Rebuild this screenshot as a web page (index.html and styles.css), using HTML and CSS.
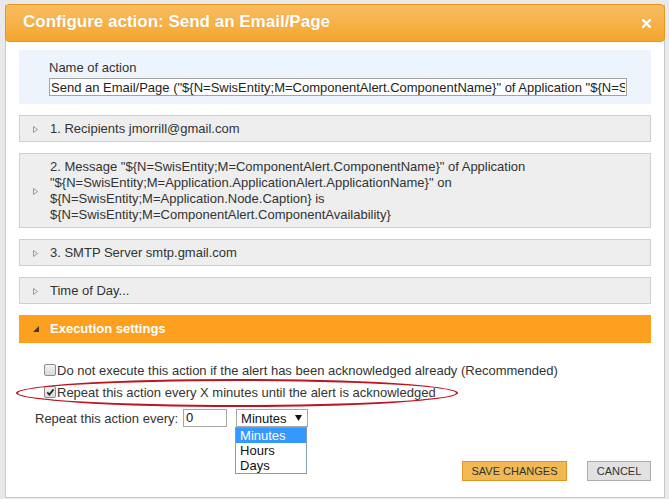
FILE: index.html
```html
<!DOCTYPE html>
<html>
<head>
<meta charset="utf-8">
<link rel="stylesheet" href="styles.css">
</head>
<body>
<div class="dialog">
  <div class="titlebar">
    <span class="title">Configure action: Send an Email/Page</span>
    <svg class="close" width="9" height="9" viewBox="0 0 9 9"><path d="M1.2 1.2 L7.8 7.8 M7.8 1.2 L1.2 7.8" stroke="#fff" stroke-width="2.3" stroke-linecap="square"/></svg>
  </div>
  <div class="content">
    <div class="name-panel">
      <div class="name-label">Name of action</div>
      <input class="name-input" type="text" value='Send an Email/Page ("${N=SwisEntity;M=ComponentAlert.ComponentName}" of Application "${N=SwisEntity;M=Application.ApplicationAlert.ApplicationName}" on ${N=SwisEntity;M=Application.Node.Caption})'>
    </div>

    <div class="row">
      <svg class="tri" width="5" height="7" viewBox="0 0 5 7"><polygon points="0.5,0.5 4.5,3.5 0.5,6.5" fill="none" stroke="#9a9a9a" stroke-width="1"/></svg>
      <div class="row-text">1. Recipients jmorrill@gmail.com</div>
    </div>
    <div class="row">
      <svg class="tri" width="5" height="7" viewBox="0 0 5 7"><polygon points="0.5,0.5 4.5,3.5 0.5,6.5" fill="none" stroke="#9a9a9a" stroke-width="1"/></svg>
      <div class="row-text">2. Message "${N=SwisEntity;M=ComponentAlert.ComponentName}" of Application<br>"${N=SwisEntity;M=Application.ApplicationAlert.ApplicationName}" on<br>${N=SwisEntity;M=Application.Node.Caption} is<br>${N=SwisEntity;M=ComponentAlert.ComponentAvailability}</div>
    </div>
    <div class="row">
      <svg class="tri" width="5" height="7" viewBox="0 0 5 7"><polygon points="0.5,0.5 4.5,3.5 0.5,6.5" fill="none" stroke="#9a9a9a" stroke-width="1"/></svg>
      <div class="row-text">3. SMTP Server smtp.gmail.com</div>
    </div>
    <div class="row">
      <svg class="tri" width="5" height="7" viewBox="0 0 5 7"><polygon points="0.5,0.5 4.5,3.5 0.5,6.5" fill="none" stroke="#9a9a9a" stroke-width="1"/></svg>
      <div class="row-text">Time of Day...</div>
    </div>

    <div class="exec-header">
      <svg class="tri-se" width="6" height="6" viewBox="0 0 6 6"><polygon points="6,0 6,6 0,6" fill="#3a3a3a"/></svg>
      <span>Execution settings</span>
    </div>
    <div class="exec-body">
      <div class="check-line"><span class="cb"></span><span>Do not execute this action if the alert has been acknowledged already (Recommended)</span></div>
      <div class="check-line"><span class="cb"><svg width="11" height="11" viewBox="0 0 11 11"><path d="M2.3 5.4 L4.4 7.6 L8.6 2.4" fill="none" stroke="#262626" stroke-width="1.7"/></svg></span><span>Repeat this action every X minutes until the alert is acknowledged</span></div>
      <div class="ellipse"></div>
      <div class="repeat-line">
        <span>Repeat this action every:</span>
        <span class="num-input">0</span>
        <div class="select-wrap">
          <div class="select"><span>Minutes</span><svg width="7" height="6" viewBox="0 0 7 6"><polygon points="0,0 7,0 3.5,6" fill="#111"/></svg></div>
          <div class="listbox">
            <div class="opt selected">Minutes</div>
            <div class="opt">Hours</div>
            <div class="opt">Days</div>
          </div>
        </div>
      </div>
    </div>

    <div class="footer">
      <button class="btn save">SAVE CHANGES</button>
      <button class="btn cancel">CANCEL</button>
    </div>
  </div>
</div>
</body>
</html>
```

FILE: styles.css
```css
html, body {
  margin: 0;
  padding: 0;
}
body {
  background: #e9e9e9;
  font-family: "Liberation Sans", Arial, sans-serif;
  font-size: 13px;
  color: #333;
  padding: 4px 0 0 5px;
  height: 499px;
  box-sizing: border-box;
  overflow: hidden;
}
.dialog {
  width: 660px;
  height: 494px;
  box-sizing: border-box;
  background: #fff;
  border: 1px solid #c9c9c9;
  border-top: none;
}
.titlebar {
  height: 38px;
  box-sizing: border-box;
  margin: 0 -1px;
  border: 1px solid #e8951c;
  border-radius: 4px;
  background: linear-gradient(#f8bd5e 0%, #f6b24a 48%, #f4a62d 100%);
  display: flex;
  align-items: center;
  justify-content: space-between;
  padding: 0 13px 2px 17px;
}
.title {
  color: #fff;
  font-weight: bold;
  font-size: 17px;
  text-shadow: 0 0 1px rgba(180, 100, 0, 0.25);
}
.close {
  display: block;
  margin-top: 2px;
}
.content {
  padding: 0 13px;
}
.name-panel {
  margin-top: 8px;
  background: #edf4fb;
  padding: 10px 24px 8px 30px;
}
.name-label {
  line-height: 16px;
  color: #333;
}
.name-input {
  display: block;
  margin: 2px 0 0 0;
  width: 578px;
  height: 18px;
  box-sizing: border-box;
  border: 1px solid #a3a3a3;
  padding: 0 1px;
  font-family: "Liberation Sans", Arial, sans-serif;
  font-size: 13px;
  color: #222;
  background: #fff;
  outline: none;
}
.row {
  margin-top: 11px;
  background: #eeeeee;
  border: 1px solid #cfcfcf;
  padding: 5px 8px 4px 13px;
  display: flex;
  align-items: center;
}
.tri {
  display: block;
  flex: none;
  margin-right: 12px;
}
.row-text {
  line-height: 16px;
  color: #333;
}
.exec-header {
  margin-top: 11px;
  height: 28px;
  background: #fd9f1f;
  display: flex;
  align-items: center;
  padding-left: 14px;
  padding-bottom: 1px;
  box-sizing: border-box;
  color: #fff;
  font-weight: bold;
  font-size: 13px;
}
.tri-se {
  display: block;
  margin-right: 11px;
  margin-top: 1px;
}
.exec-body {
  position: relative;
  padding-top: 16px;
}
.check-line {
  height: 22px;
  display: flex;
  align-items: center;
  padding-left: 25px;
  color: #333;
}
.cb {
  width: 12px;
  height: 12px;
  box-sizing: border-box;
  border: 1px solid #8c8c8c;
  border-radius: 2px;
  background: linear-gradient(#f3f3f3, #d9d9d9);
  margin-right: 1px;
  flex: none;
  position: relative;
}
.cb svg {
  position: absolute;
  left: -0.5px;
  top: -0.5px;
}
.ellipse {
  position: absolute;
  left: -3px;
  top: 36px;
  width: 442px;
  height: 28px;
  box-sizing: border-box;
  border: 2px solid #be1420;
  border-radius: 50%;
  pointer-events: none;
}
.repeat-line {
  margin-top: 6px;
  padding-left: 16px;
  display: flex;
  align-items: center;
  height: 18px;
}
.num-input {
  margin-left: 5px;
  width: 44px;
  height: 18px;
  box-sizing: border-box;
  border: 1px solid #a5a5a5;
  padding-left: 2px;
  line-height: 16px;
  color: #111;
}
.select-wrap {
  position: relative;
  margin-left: 9px;
}
.select {
  width: 72px;
  height: 18px;
  box-sizing: border-box;
  border: 1px solid #a6a6a6;
  display: flex;
  align-items: center;
  justify-content: space-between;
  padding: 0 5px 0 4px;
  color: #111;
  background: #fff;
}
.listbox {
  position: absolute;
  left: -1px;
  top: 18px;
  width: 72px;
  box-sizing: border-box;
  border: 1px solid #7f9db9;
  background: #fff;
}
.opt {
  line-height: 15px;
  padding-left: 4px;
  color: #111;
}
.opt.selected {
  background: #3399ff;
  color: #fff;
}
.footer {
  margin-top: 34px;
  display: flex;
  justify-content: flex-end;
  gap: 20px;
}
.btn {
  height: 20px;
  box-sizing: border-box;
  font-family: "Liberation Sans", Arial, sans-serif;
  font-size: 11px;
  color: #333;
  padding: 0;
  border-radius: 0;
  cursor: pointer;
}
.btn.save {
  width: 105px;
  background: #f0b955;
  border: 1px solid #e1961c;
}
.btn.cancel {
  width: 64px;
  background: #e1e1e1;
  border: 1px solid #adadad;
}
```
